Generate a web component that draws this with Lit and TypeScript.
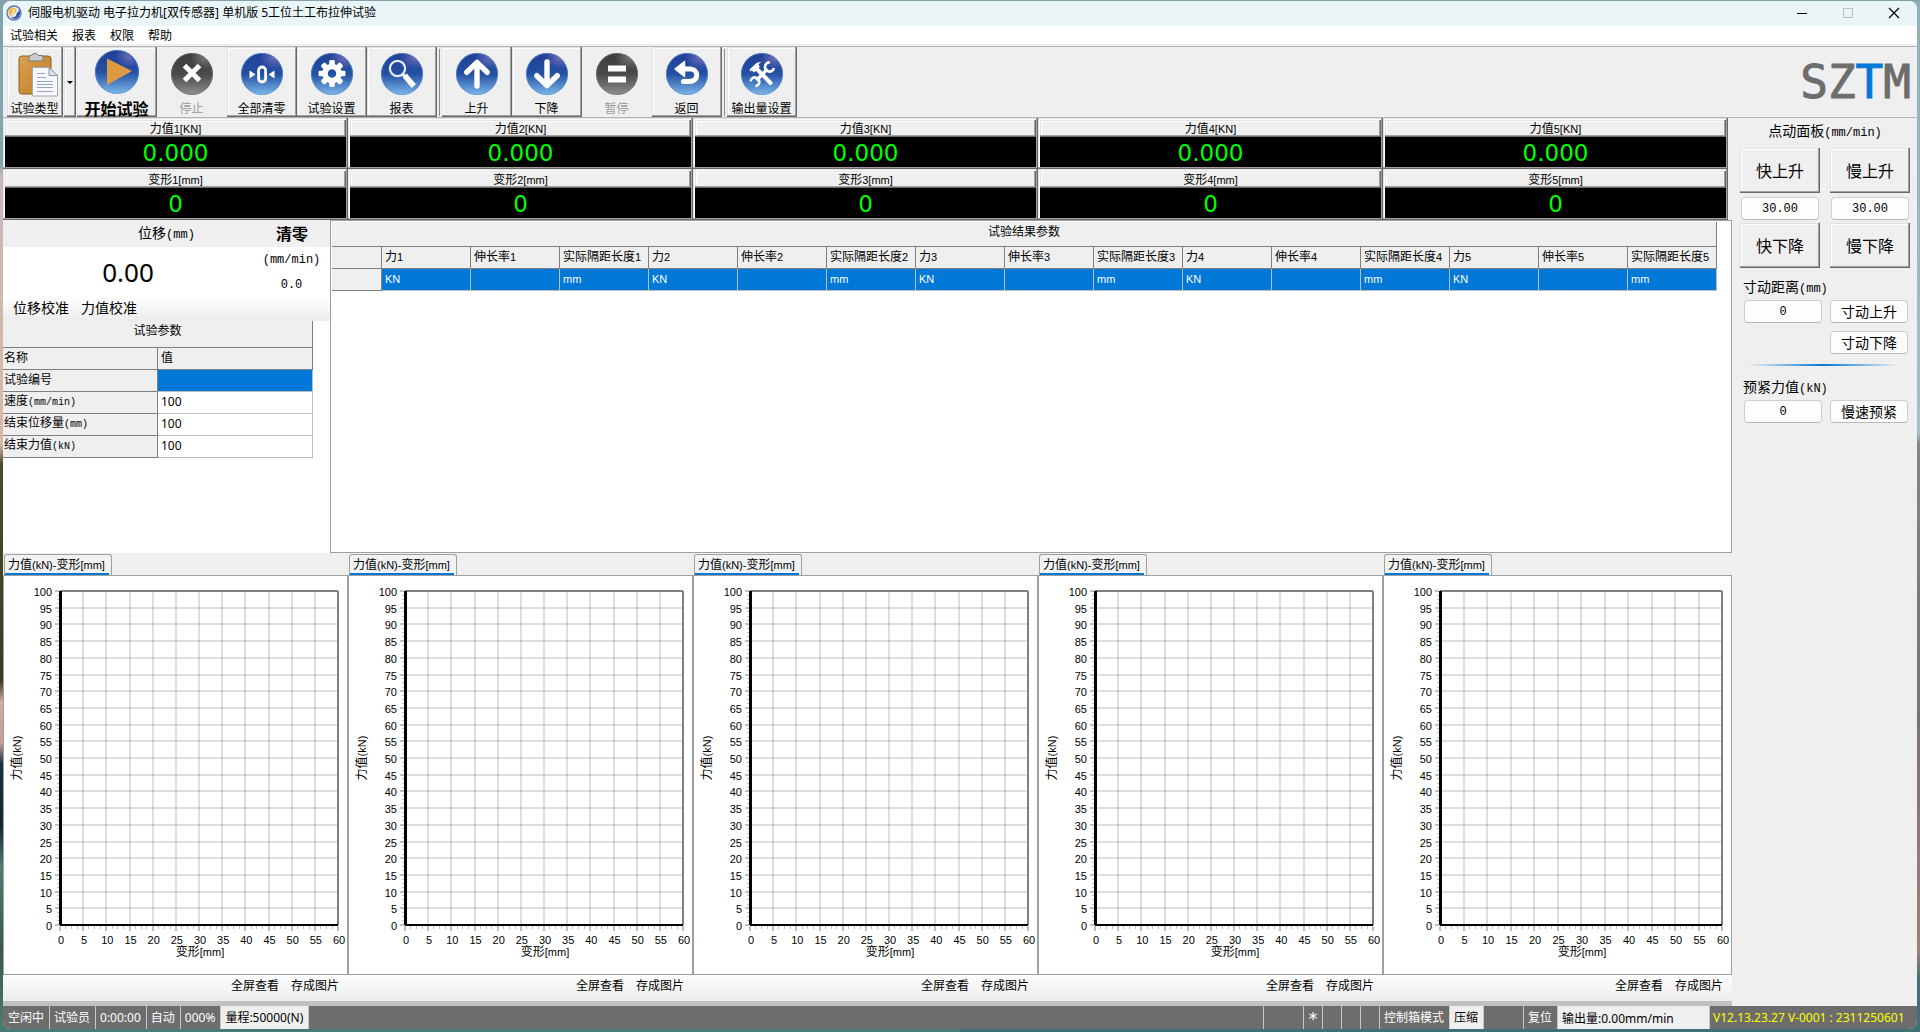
import { LitElement, html, svg, css, nothing } from "lit";
import type { SVGTemplateResult, TemplateResult } from "lit";
import { customElement, property } from "lit/decorators.js";
import { classMap } from "lit/directives/class-map.js";

/* Wraps Latin runs so that they can be set a little smaller than the Chinese text. */
const mix = (text: string, cls = "latin"): TemplateResult => html`${text
  .split(/([\x20-\x7e]+)/)
  .filter((part) => part !== "")
  .map((part) => (/^[\x20-\x7e]+$/.test(part) ? html`<span class=${cls}>${part}</span>` : part))}`;

const shared = css`
  * {
    box-sizing: border-box;
  }
  button,
  input {
    font: inherit;
    color: inherit;
    margin: 0;
    padding: 0;
    border: 0;
    background: none;
    border-radius: 0;
  }
  .latin {
    font-family: "Liberation Sans", sans-serif;
    font-size: 11px;
  }
  .mono {
    font-family: "Liberation Mono", monospace;
    font-size: 10px;
  }
  .mono-l {
    font-family: "Liberation Mono", monospace;
    font-size: 12px;
  }
`;

type Glyph =
  | "clipboard" | "play" | "stop" | "zero" | "gear" | "search"
  | "up" | "down" | "pause" | "back" | "tools";

const glyphs: Record<Glyph, SVGTemplateResult> = {
  clipboard: svg``,
  play: svg`<path d="M14 10.5 L39 23 L14 37 Z" fill="#dd9a40"/>`,
  stop: svg`<path d="M16.5 15.5 L31.5 30.5 M31.5 15.5 L16.5 30.5" stroke="#fff" stroke-width="5"/>`,
  zero: svg`
    <rect x="20.6" y="17" width="7" height="15" rx="3.5" fill="none" stroke="#fff" stroke-width="2.8"/>
    <path d="M11.5 20.5 L17.5 24.5 L11.5 28.5 Z M36.5 20.5 L30.5 24.5 L36.5 28.5 Z" fill="#fff"/>`,
  gear: svg`
    <circle cx="24" cy="23.5" r="7" fill="none" stroke="#fff" stroke-width="5.5"/>
    ${[0, 45, 90, 135, 180, 225, 270, 315].map(
      (a) => svg`<rect x="21.2" y="10" width="5.6" height="5.6" rx="1.4" fill="#fff" transform="rotate(${a} 24 23.5)"/>`,
    )}`,
  search: svg`
    <circle cx="19.5" cy="18.5" r="7.6" fill="none" stroke="#e4eaf6" stroke-width="2.2"/>
    <path d="M25 24.5 L28 27.5" stroke="#fff" stroke-width="2.6"/>
    <path d="M28.5 27.5 L34 34" stroke="#fff" stroke-width="5.6" stroke-linecap="square"/>`,
  up: svg`<path d="M24 36 V13 M13.8 22.3 L24 12.4 L34.2 22.3" stroke="#fff" stroke-width="5.4" fill="none" stroke-linecap="round" stroke-linejoin="round"/>`,
  down: svg`<path d="M24 12 V35 M13.8 25.7 L24 35.6 L34.2 25.7" stroke="#fff" stroke-width="5.4" fill="none" stroke-linecap="round" stroke-linejoin="round"/>`,
  pause: svg`<path d="M15 15.5 H33 V21.5 H15 Z M15 26.5 H33 V32.5 H15 Z" fill="#fff"/>`,
  back: svg`
    <path d="M18 19 H27.5 A6 6 0 0 1 27.5 31.4 H20.5" stroke="#fff" stroke-width="5" fill="none" stroke-linecap="round"/>
    <path d="M12 19 L21.5 11.5 V26.5 Z" fill="#fff" stroke="#fff" stroke-width="1.5" stroke-linejoin="round"/>`,
  tools: svg`
    <path d="M18 18 L32.5 33" stroke="#fff" stroke-width="4" stroke-linecap="round"/>
    <path d="M11.5 19.5 L18.8 12.8 L23.6 11.8 L20.6 14.2 L21.8 17 L16 22.4 L14 20.4 L12.4 21.6 Z" fill="#fff"/>
    <path d="M18.5 30.5 L29.5 18.8" stroke="#fff" stroke-width="3.4"/>
    <path d="M31.8 12.4 A4.6 4.6 0 1 0 36 18.2 M12.6 31.2 A4.4 4.4 0 1 1 17.4 36.2" stroke="#fff" stroke-width="2.6" fill="none"/>`,
};

@customElement("tool-icon")
export class ToolIcon extends LitElement {
  static styles = css`
    :host {
      display: block;
      width: 48px;
      height: 48px;
    }
    svg {
      display: block;
      width: 100%;
      height: 100%;
    }
  `;

  @property() name: Glyph = "play";
  @property({ type: Boolean }) muted = false;

  private clipboard() {
    return html`<svg viewBox="0 0 48 48" aria-hidden="true">
      <defs>
        <linearGradient id="board" x1="0" y1="0" x2="1" y2="1">
          <stop offset="0" stop-color="#dba253" />
          <stop offset="1" stop-color="#b97c22" />
        </linearGradient>
      </defs>
      <rect x="8" y="6" width="32" height="38" rx="3" fill="url(#board)" stroke="#8f5f1d" />
      <path d="M18 11 V7 Q18 5.5 20 5.5 H20.5 Q21 3.5 24 3.5 Q27 3.5 27.5 5.5 H30 Q32 5.5 32 7 V11 Z" fill="#c9cbcc" stroke="#77797b" />
      <path d="M21.5 17.5 H38 L46.5 25.5 V46 H21.5 Z" fill="#f7f8fb" stroke="#a3a8b8" />
      <path d="M38 17.5 V25.5 H46.5 Z" fill="#dfe3ec" stroke="#8d93a6" />
      <path d="M26 23.5 H34 M26 27.5 H35 M26 31.5 H42 M26 34.5 H42 M26 37.5 H42 M26 41.5 H42" stroke="#9ba3be" />
    </svg>`;
  }

  render() {
    if (this.name === "clipboard") return this.clipboard();
    const r = this.name === "play" ? 22 : 21;
    const stops = this.muted
      ? ["#3c3c3c", "#4a4a4a", "#8f8f8f"]
      : ["#1f3f96", "#2450a4", "#7db8ea"];
    return html`<svg viewBox="0 0 48 48" aria-hidden="true">
      <defs>
        <linearGradient id="ball" x1="0" y1="0" x2="0" y2="1">
          <stop offset="0" stop-color=${stops[0]} />
          <stop offset="0.5" stop-color=${stops[1]} />
          <stop offset="1" stop-color=${stops[2]} />
        </linearGradient>
        <radialGradient id="shine" cx="0.75" cy="0.2" r="0.5">
          <stop offset="0" stop-color=${this.muted ? "#8a8a8a" : "#8a7cc4"} stop-opacity="0.75" />
          <stop offset="1" stop-color=${this.muted ? "#8a8a8a" : "#8a7cc4"} stop-opacity="0" />
        </radialGradient>
      </defs>
      <circle cx="24" cy="24" r=${r} fill="url(#ball)" />
      <path d="M14 5.5 A21 21 0 0 1 44.8 24 Q33 22 26 26 Q16 15 14 5.5 Z" fill="url(#shine)" />
      <circle cx="24" cy="24" r=${r - 0.5} fill="none" stroke=${this.muted ? "#7c7c7c" : "#5b8fd0"} stroke-opacity="0.6" />
      ${glyphs[this.name]}
    </svg>`;
  }
}

@customElement("chart-panel")
export class ChartPanel extends LitElement {
  static styles = [
    shared,
    css`
      :host {
        display: flex;
        flex-direction: column;
        min-width: 0;
        background: #efefef;
      }
      .tabs {
        display: flex;
        height: 22px;
        padding: 1px 1px 0;
      }
      .tab {
        height: 21px;
        padding: 0 6px 0 3px;
        border: 1px solid #a0a0a0;
        border-bottom: 0;
        border-radius: 3px 3px 0 0;
        background: linear-gradient(#0078d7, #0078d7) 0 100% / calc(100% - 2px) 2px no-repeat #f2f2f2;
        line-height: 19px;
        white-space: nowrap;
      }
      .page {
        flex: 1;
        min-height: 0;
        display: flex;
        border: 1px solid #a0a0a0;
        background: #fff;
        padding: 15px 9px 49px 56px;
      }
      svg {
        flex: 1;
        min-width: 0;
        display: block;
        overflow: visible;
      }
      .scale {
        font: 11px "Liberation Sans", sans-serif;
      }
      .title {
        font-size: 12px;
      }
      .actions {
        display: flex;
        justify-content: flex-end;
        gap: 12px;
        height: 26px;
        padding: 1px 9px 5px;
        background: linear-gradient(#fdfdfd, #ececec);
      }
    `,
  ];

  private plot() {
    const lines: SVGTemplateResult[] = [];
    for (let i = 1; i < 12; i++)
      lines.push(svg`<line x1=${`${(i * 100) / 12}%`} x2=${`${(i * 100) / 12}%`} y1="0" y2="100%" stroke="#000" stroke-opacity=".13" stroke-width="2"/>`);
    for (let i = 1; i < 20; i++)
      lines.push(svg`<line x1="0" x2="100%" y1=${`${i * 5}%`} y2=${`${i * 5}%`} stroke="#000" stroke-opacity=".13" stroke-width="2"/>`);
    for (let i = 0; i <= 80; i++) {
      const major = i % 4 === 0;
      lines.push(svg`<line x1=${major ? -5 : -3} x2="-1" y1=${`${i * 1.25}%`} y2=${`${i * 1.25}%`} stroke="#c0c0c0" stroke-width=${major ? 2 : 1}/>`);
    }
    for (let i = 0; i <= 48; i++) {
      const x = `${(i * 100) / 48}%`;
      const major = i % 4 === 0;
      lines.push(svg`<svg x=${x} y="100%" overflow="visible"><line x1="0" x2="0" y1="1" y2=${major ? 6 : 4} stroke="#c0c0c0" stroke-width=${major ? 2 : 1}/></svg>`);
    }
    return svg`
      <g shape-rendering="crispEdges">
        ${lines}
        <line x1="0" x2="100%" y1="0" y2="0" stroke="#808080" stroke-width="2"/>
        <line x1="100%" x2="100%" y1="0" y2="100%" stroke="#808080" stroke-width="2"/>
        <line x1="0" x2="100%" y1="100%" y2="100%" stroke="#000" stroke-width="2"/>
        <line x1="0" x2="0" y1="0" y2="100%" stroke="#000" stroke-width="3"/>
      </g>`;
  }

  render() {
    return html`
      <div class="tabs"><button class="tab">${mix("力值(kN)-变形[mm]")}</button></div>
      <div class="page">
        <svg>
          ${this.plot()}
          <g class="scale">
            ${Array.from({ length: 21 }, (_, i) => svg`<text x="-8" y=${`${i * 5}%`} dy="5" text-anchor="end">${100 - i * 5}</text>`)}
            ${Array.from({ length: 13 }, (_, i) => svg`<text x=${`${(i * 100) / 12}%`} y="100%" dx="1" dy="19" text-anchor="middle">${i * 5}</text>`)}
          </g>
          <text class="title" x="50%" y="100%" dx="1" dy="31" text-anchor="middle">变形<tspan class="latin">[mm]</tspan></text>
          <svg x="-39" y="50%" overflow="visible">
            <text class="title" transform="rotate(-90)" text-anchor="middle">力值<tspan class="latin">(kN)</tspan></text>
          </svg>
        </svg>
      </div>
      <div class="actions"><button>全屏查看</button><button>存成图片</button></div>
    `;
  }
}

interface Tool {
  label: string;
  icon: Glyph;
  disabled?: boolean;
  kind?: "type" | "start";
  gap?: boolean;
}

const tools: Tool[] = [
  { label: "试验类型", icon: "clipboard", kind: "type" },
  { label: "开始试验", icon: "play", kind: "start" },
  { label: "停止", icon: "stop", disabled: true },
  { label: "全部清零", icon: "zero" },
  { label: "试验设置", icon: "gear" },
  { label: "报表", icon: "search" },
  { label: "上升", icon: "up", gap: true },
  { label: "下降", icon: "down" },
  { label: "暂停", icon: "pause", disabled: true },
  { label: "返回", icon: "back" },
  { label: "输出量设置", icon: "tools", gap: true },
];

const stations = [1, 2, 3, 4, 5];

const params: [string, string][] = [
  ["试验编号", ""],
  ["速度(mm/min)", "100"],
  ["结束位移量(mm)", "100"],
  ["结束力值(kN)", "100"],
];

@customElement("app-root")
export class AppRoot extends LitElement {
  static styles = [
    shared,
    css`
      :host {
        display: flex;
        height: 100vh;
        box-sizing: border-box;
        padding: 1px 3px 3px;
        font: 12px/16px "Noto Sans", "Noto Sans CJK SC", sans-serif;
        color: #000;
        background:
          linear-gradient(#82a0aa 0 1px, transparent 1px),
          linear-gradient(#8fb0b8 0, #a3c0c6 42%, #8d8088 43%, #7c7078 70%, #a08078 92%, #3f7176 95%) 100% 0 / 50% 100% no-repeat,
          linear-gradient(#7fa3ae 0, #86a5ad 16%, #c9b7b6 17%, #d9b9a4 43%, #4d4a2c 45%, #3f3b22 66%, #d4aaa2 68%, #c79b98 72%, #18303e 74%, #14252f 80%, #4c7d78 84%, #3c5a45 92%, #4a7c78 100%) 0 0 / 50% 100% no-repeat;
      }
      .window {
        flex: 1;
        min-width: 0;
        display: flex;
        flex-direction: column;
        background: #efefef;
        border-radius: 8px;
        overflow: hidden;
      }

      .titlebar {
        display: flex;
        align-items: center;
        gap: 6px;
        height: 25px;
        padding: 0 17px 1px 3px;
        background: #eaf5f8;
      }
      .titlebar h1 {
        flex: 1;
        margin: 0;
        font-size: 12px;
        font-weight: 400;
      }
      .appicon {
        width: 16px;
        height: 16px;
      }
      .controls {
        display: flex;
        gap: 34px;
      }
      .controls button {
        width: 12px;
        height: 12px;
      }
      .controls svg {
        display: block;
      }
      .menu {
        display: flex;
        gap: 14px;
        height: 18px;
        padding: 1px 7px 0;
        background: #fff;
      }

      .top {
        display: flex;
        align-items: center;
        justify-content: space-between;
        margin-top: 2px;
        padding: 0 6px 0 4px;
        border: solid #b4b4b4;
        border-width: 1px 0;
      }
      .toolbar {
        display: flex;
        height: 70px;
      }
      .raised {
        box-shadow:
          inset -1px -1px #696969,
          inset -2px -2px #a0a0a0,
          inset 1px 1px #e3e3e3,
          inset 2px 2px #fff;
      }
      .tool {
        display: flex;
        flex-direction: column;
        align-items: center;
        justify-content: space-between;
        width: 70px;
        padding: 3px 1px 0 0;
        white-space: nowrap;
      }
      .tool:disabled {
        color: #9b9b9b;
      }
      .tool.type {
        width: 56px;
      }
      .tool.start {
        width: 80px;
        padding-top: 1px;
        font-size: 16px;
        font-weight: 700;
      }
      .drop {
        width: 12px;
        margin: 0 1px;
        display: grid;
        place-items: center;
      }
      .drop::before {
        content: "";
        border: 3px solid transparent;
        border-top-color: #000;
        border-bottom: 0;
      }
      .sep {
        width: 1px;
        margin: 2px 2px 1px;
        background: #8a8a8a;
      }
      .brand {
        font: 46px/60px "DejaVu Sans Mono", monospace;
        color: #6d6d6d;
        -webkit-text-stroke: 1px;
      }
      .brand b {
        font-weight: 400;
        color: #0078d7;
      }

      .workspace {
        flex: 1;
        min-height: 0;
        display: flex;
      }
      .main {
        flex: 1;
        min-width: 0;
        display: flex;
        flex-direction: column;
      }
      .readouts {
        display: grid;
        grid-template-columns: repeat(5, 1fr);
        margin-right: 4px;
        text-align: center;
      }
      .readout {
        padding: 2px;
      }
      .readout h2 {
        margin: 0;
        height: 17px;
        font-size: 12px;
        font-weight: 400;
        line-height: 17px;
      }
      .readout output {
        display: block;
        height: 30px;
        background: #000;
        color: #00ff00;
        font: 23px/32px "DejaVu Sans", sans-serif;
      }

      .middle {
        display: flex;
        height: 333px;
      }
      .left {
        width: 327px;
        background: #fff;
      }
      .travel-head {
        display: grid;
        grid-template-columns: 1fr auto 1fr;
        align-items: center;
        height: 27px;
        background: #efefef;
      }
      .travel-head h2 {
        grid-column: 2;
        margin: 0;
        font-size: 14px;
        font-weight: 400;
      }
      .travel-head button {
        justify-self: end;
        padding-right: 22px;
        font-size: 16px;
        font-weight: 700;
      }
      .travel {
        display: grid;
        grid-template-columns: 1fr 77px;
        height: 50px;
      }
      .travel output {
        font-size: 26px;
        line-height: 50px;
        text-align: center;
      }
      .rate {
        display: flex;
        flex-direction: column;
        justify-content: space-between;
        align-items: center;
        padding: 5px 0 4px;
        white-space: nowrap;
      }
      .calibrate {
        display: flex;
        gap: 12px;
        height: 24px;
        padding: 0 10px 2px;
        background: linear-gradient(#fff, #ececec);
        font-size: 14px;
      }

      table {
        border-collapse: separate;
        border-spacing: 0;
        table-layout: fixed;
      }
      th,
      td,
      caption {
        height: 22px;
        padding: 0 0 2px 3px;
        text-align: left;
        font-weight: 400;
        line-height: 16px;
        white-space: nowrap;
        border: solid #808080;
        border-width: 0 1px 1px 0;
        background: #efefef;
      }
      td {
        border-color: #bdbdbd;
        background: #fff;
      }
      caption {
        text-align: center;
      }
      .params {
        width: 310px;
      }
      .params caption {
        height: 27px;
        padding: 2px 0 0;
      }
      .params th:first-child {
        padding-left: 1px;
      }
      td.selected {
        background: #0078d7;
        color: #fff;
      }
      .results {
        flex: 1;
        min-width: 0;
        border: 1px solid #a0a0a0;
        background: #fff;
        padding: 1px 14px 0 1px;
      }
      .results table {
        width: 100%;
      }
      .results caption {
        height: 25px;
        padding: 2px 0 0;
      }
      .results .index {
        width: 50px;
      }

      .charts {
        flex: 1;
        min-height: 0;
        display: grid;
        grid-template-columns: repeat(4, 345fr) 349fr;
      }
      .shelf {
        height: 5px;
        background: #c0c0c0;
      }

      .side {
        width: 185px;
        padding: 4px 7px 0 8px;
        font-size: 14px;
      }
      .side h2 {
        margin: 0 0 6px;
        font-size: 14px;
        font-weight: 400;
        line-height: 18px;
        text-align: center;
      }
      .jog {
        display: grid;
        grid-template-columns: 80px 80px;
        justify-content: space-between;
        row-gap: 3px;
      }
      .jog button {
        height: 45px;
        font-size: 16px;
      }
      .jog input {
        margin: 1px 1px 0;
      }
      .field {
        min-width: 0;
        height: 23px;
        border: 1px solid #cfcfcf;
        border-bottom-color: #b8b8b8;
        border-radius: 4px;
        background: #fdfdfd;
        text-align: center;
        line-height: 20px;
      }
      input.field {
        font: 12px "Liberation Mono", monospace;
      }
      .step {
        display: grid;
        grid-template-columns: 78px 78px;
        justify-content: space-between;
        gap: 8px 0;
        padding: 10px 2px 0 4px;
      }
      .step label {
        grid-column: 1 / -1;
        margin: 0 0 -6px -1px;
        line-height: 18px;
      }
      .step .last {
        grid-column: 2;
      }
      .rule {
        height: 2px;
        margin: 10px 12px 2px 8px;
        border: 0;
        background: linear-gradient(90deg, #0078d700, #0078d7, #0078d700);
      }

      .status {
        display: flex;
        height: 23px;
        padding-left: 1px;
        background: #6d6d6d;
        color: #fff;
        line-height: 23px;
        white-space: nowrap;
      }
      .status span {
        padding: 0 5px 0 4px;
        border-right: 1px solid #c8c8c8;
      }
      .status .light {
        background: #efefef;
        color: #000;
      }
      .status .fill {
        flex: 1;
      }
      .status .w19 {
        width: 19px;
      }
      .status .w40 {
        width: 40px;
      }
      .status .mark {
        width: 19px;
        padding: 3px 0 0;
        font: 18px/20px "DejaVu Sans", sans-serif;
        text-align: center;
      }
      .status .output {
        width: 152px;
        line-height: 25px;
      }
      .status .version {
        width: 207px;
        border: 0;
        padding: 0 0 0 3px;
        color: #ffff00;
      }
    `,
  ];

  private tool(t: Tool) {
    return html`
      ${t.gap ? html`<i class="sep"></i>` : nothing}
      <button
        class=${classMap({ tool: true, raised: !t.disabled, type: t.kind === "type", start: t.kind === "start" })}
        ?disabled=${t.disabled}
      >
        <tool-icon name=${t.icon} ?muted=${t.disabled}></tool-icon>${t.label}
      </button>
      ${t.kind === "type" ? html`<button class="drop raised" aria-label="试验类型"></button>` : nothing}
    `;
  }

  private readout(name: string, unit: string, value: string) {
    return stations.map(
      (n) => html`<section class="readout raised">
        <h2 class="raised">${mix(`${name}${n}[${unit}]`)}</h2>
        <output>${value}</output>
      </section>`,
    );
  }

  private leftPanel() {
    return html`<section class="left">
      <div class="travel-head"><h2>${mix("位移(mm)", "mono-l")}</h2><button>清零</button></div>
      <div class="travel">
        <output>0.00</output>
        <div class="rate"><span class="mono-l">(mm/min)</span><span class="mono-l">0.0</span></div>
      </div>
      <div class="calibrate"><button>位移校准</button><button>力值校准</button></div>
      <table class="params">
        <caption>试验参数</caption>
        <tr><th>名称</th><th>值</th></tr>
        ${params.map(
          ([name, value]) => html`<tr>
            <th>${mix(name, "mono")}</th>
            <td class=${classMap({ selected: value === "" })}>${value}</td>
          </tr>`,
        )}
      </table>
    </section>`;
  }

  private results() {
    return html`<section class="results">
      <table>
        <caption>试验结果参数</caption>
        <tr>
          <th class="index"></th>
          ${stations.map((n) => ["力", "伸长率", "实际隔距长度"].map((name) => html`<th>${mix(name + n)}</th>`))}
        </tr>
        <tr>
          <th></th>
          ${stations.map(() => ["KN", "", "mm"].map((unit) => html`<td class="selected">${mix(unit)}</td>`))}
        </tr>
      </table>
    </section>`;
  }

  private side() {
    return html`<aside class="side">
      <h2>${mix("点动面板(mm/min)", "mono-l")}</h2>
      <div class="jog">
        <button class="raised">快上升</button>
        <button class="raised">慢上升</button>
        <input class="field" aria-label="快上升" value="30.00" />
        <input class="field" aria-label="慢上升" value="30.00" />
        <button class="raised">快下降</button>
        <button class="raised">慢下降</button>
      </div>
      <div class="step">
        <label for="step">${mix("寸动距离(mm)", "mono-l")}</label>
        <input class="field" id="step" value="0" />
        <button class="field">寸动上升</button>
        <button class="field last">寸动下降</button>
      </div>
      <hr class="rule" />
      <div class="step">
        <label for="preload">${mix("预紧力值(kN)", "mono-l")}</label>
        <input class="field" id="preload" value="0" />
        <button class="field">慢速预紧</button>
      </div>
    </aside>`;
  }

  render() {
    return html`<div class="window">
      <header class="titlebar">
        <svg class="appicon" viewBox="0 0 16 16" aria-hidden="true">
          <circle cx="8" cy="8" r="7" fill="#e8eef8" stroke="#5a78b4" stroke-width="1.4" />
          <path d="M3 4 Q7 1 10 4 Q11.5 6 8.5 8 Q6 9.5 6 12 Q1 9 3 4Z" fill="#f0b53c" />
          <path d="M13 4 Q16 10 10.5 13.5 Q7 14.5 5 12.5 Q11 12.5 10.5 8.5 Q13 7 13 4Z" fill="#2d4f9e" />
          <path d="M6 4.5 Q9 4.5 7.5 7 Q5 9 5.5 10.5" stroke="#fff" fill="none" />
        </svg>
        <h1>伺服电机驱动 电子拉力机[双传感器] 单机版 5工位土工布拉伸试验</h1>
        <div class="controls">
          <button aria-label="最小化"><svg width="12" height="12"><path d="M1 6.5 H11" stroke="#000" /></svg></button>
          <button aria-label="最大化"><svg width="12" height="12"><rect x="1.5" y="1.5" width="9" height="9" fill="none" stroke="#b8c2c5" /></svg></button>
          <button aria-label="关闭"><svg width="12" height="12"><path d="M1 1 L11 11 M11 1 L1 11" stroke="#000" stroke-width="1.2" /></svg></button>
        </div>
      </header>
      <nav class="menu">${["试验相关", "报表", "权限", "帮助"].map((m) => html`<button>${m}</button>`)}</nav>
      <div class="top">
        <div class="toolbar">${tools.map((t) => this.tool(t))}</div>
        <div class="brand">SZ<b>T</b>M</div>
      </div>
      <div class="workspace">
        <main class="main">
          <div class="readouts">
            ${this.readout("力值", "KN", "0.000")}${this.readout("变形", "mm", "0")}
          </div>
          <div class="middle">${this.leftPanel()}${this.results()}</div>
          <div class="charts">${stations.map(() => html`<chart-panel></chart-panel>`)}</div>
          <div class="shelf"></div>
        </main>
        ${this.side()}
      </div>
      <footer class="status">
        <span>空闲中</span><span>试验员</span><span>0:00:00</span><span>自动</span><span>000%</span
        ><span class="light">量程:50000(N)</span><span class="fill"></span><span class="w40"></span
        ><span class="mark">*</span><span class="w19"></span><span class="w19"></span><span class="w19"></span
        ><span>控制箱模式</span><span class="light">压缩</span><span class="w40"></span><span>复位</span
        ><span class="light output">输出量:0.00mm/min</span><span class="version">V12.13.23.27 V-0001 : 2311250601</span>
      </footer>
    </div>`;
  }
}
